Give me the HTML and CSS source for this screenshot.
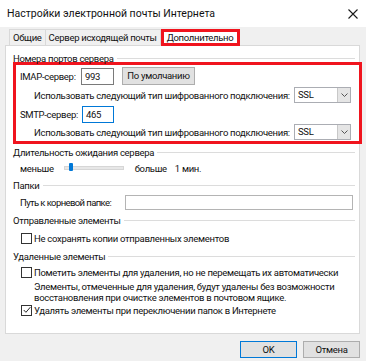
FILE: index.html
```html
<!DOCTYPE html>
<html lang="ru">
<head>
    <meta charset="UTF-8">
    <title>Настройки электронной почты Интернета</title>
    <link rel="stylesheet" href="styles.css">
</head>
<body>

    <div class="titlebar">
        <span class="title">Настройки электронной почты Интернета</span>
        <svg class="close" width="10" height="10" viewBox="0 0 10 10">
            <path d="M0.5 0.5 L9.5 9.5 M9.5 0.5 L0.5 9.5" stroke="#1a1a1a" stroke-width="1.1" fill="none"/>
        </svg>
    </div>

    <div class="tabs">
        <div class="tab">Общие</div>
        <div class="tab">Сервер исходящей почты</div>
        <div class="tab active">Дополнительно</div>
    </div>

    <div class="panel">
        <div class="group-head first"><span>Номера портов сервера</span></div>
        <div class="marked">
            <div class="row port-row">
                <span class="port-label">IMAP-сервер:</span>
                <div class="field port">993</div>
                <div class="btn">По умолчанию</div>
            </div>
            <div class="row enc-row tall">
                <span>Использовать следующий тип шифрованного подключения:</span>
                <div class="select"><span class="value">SSL</span><span class="drop"><svg width="7" height="4" viewBox="0 0 7 4"><path d="M0.5 0.5 L3.5 3.5 L6.5 0.5" stroke="#555" fill="none"/></svg></span></div>
            </div>
            <div class="row port-row">
                <span class="port-label">SMTP-сервер:</span>
                <div class="field port focus">465</div>
            </div>
            <div class="row enc-row">
                <span>Использовать следующий тип шифрованного подключения:</span>
                <div class="select"><span class="value">SSL</span><span class="drop"><svg width="7" height="4" viewBox="0 0 7 4"><path d="M0.5 0.5 L3.5 3.5 L6.5 0.5" stroke="#555" fill="none"/></svg></span></div>
            </div>
        </div>

        <div class="group-head h16"><span>Длительность ожидания сервера</span></div>
        <div class="row slider-row">
            <span>меньше</span>
            <div class="track"><div class="thumb"></div></div>
            <span class="more">больше</span>
            <span>1 мин.</span>
        </div>

        <div class="group-head h18"><span>Папки</span></div>
        <div class="row path-row">
            <span class="path-label">Путь к корневой папке:</span>
            <div class="field path"></div>
        </div>

        <div class="group-head h19"><span>Отправленные элементы</span></div>
        <div class="row check-row h17">
            <span class="checkbox"></span>
            <span>Не сохранять копии отправленных элементов</span>
        </div>

        <div class="group-head h18"><span>Удаленные элементы</span></div>
        <div class="row check-row h15">
            <span class="checkbox"></span>
            <span>Пометить элементы для удаления, но не перемещать их автоматически</span>
        </div>
        <p class="note">Элементы, отмеченные для удаления, будут удалены без возможности<br>восстановления при очистке элементов в почтовом ящике.</p>
        <div class="row check-row h14">
            <span class="checkbox checked"><svg width="9" height="8" viewBox="0 0 9 8"><path d="M0.8 4 L3.3 6.6 L8.3 0.8" stroke="#222" stroke-width="1.1" fill="none"/></svg></span>
            <span>Удалять элементы при переключении папок в Интернете</span>
        </div>
    </div>

    <div class="footer">
        <div class="btn dialog default">OK</div>
        <div class="btn dialog">Отмена</div>
    </div>

</body>
</html>
```

FILE: styles.css
```css
body {
    font-family: Roboto, "Noto Sans", sans-serif;
    font-size: 9.5px;
    letter-spacing: -0.3px;
    color: #111;
    background: #f0f0f0;
    margin: 0;
    padding: 0;
    width: 366px;
    height: 361px;
    overflow: hidden;
    white-space: nowrap;
}
.titlebar {
    height: 27px;
    background: #fff;
    display: flex;
    align-items: center;
    justify-content: space-between;
    padding: 0 8px 0 7px;
    font-size: 10.5px;
    letter-spacing: 0;
}
.close {
    display: block;
}

.tabs {
    display: flex;
    height: 16px;
    margin-top: 2px;
    padding-left: 9px;
    position: relative;
    z-index: 1;
}
.tab {
    padding: 0 3px;
    line-height: 15px;
    border: 1px solid #d9d9d9;
    border-bottom: none;
    margin-right: -1px;
}
.tab.active {
    background: #fff;
    border: 3px solid #f0141e;
    line-height: 11px;
    height: 17px;
    box-sizing: border-box;
    margin-left: 1px;
    padding: 0 4px 0 3px;
}

.panel {
    background: #fff;
    border: 1px solid #d9d9d9;
    margin: 0 6px 0 5px;
    height: 289px;
    box-sizing: border-box;
    padding: 6px 4px 0 7px;
}
.group-head {
    display: flex;
    align-items: center;
    height: 12px;
}
.group-head::after {
    content: "";
    flex: 1;
    border-top: 1px solid #dcdcdc;
    margin-left: 3px;
}
.h16 { height: 16px; }
.h18 { height: 18px; }
.h19 { height: 19px; }
.h17 { height: 17px; }
.h15 { height: 15px; }
.h14 { height: 14px; }

.marked {
    border: 3px solid #f0141e;
    margin: -2px -7px 0 0;
    padding: 2px 0 0 4px;
}
.row {
    display: flex;
    align-items: center;
}
.row > span {
    flex-shrink: 0;
}
.port-row {
    height: 18px;
}
.port-label {
    width: 61px;
}
.field {
    border: 1px solid #7a7a7a;
    background: #fff;
    box-sizing: border-box;
}
.port {
    width: 33px;
    height: 17px;
    line-height: 15px;
    padding-left: 3px;
}
.port.focus {
    border-color: #0078d7;
    margin-left: 1px;
    width: 32px;
}
.btn {
    background: #e1e1e1;
    border: 1px solid #adadad;
    box-sizing: border-box;
    text-align: center;
}
.port-row .btn {
    margin-left: 8px;
    width: 73px;
    height: 18px;
    line-height: 16px;
}

.enc-row {
    height: 18px;
    padding-left: 14px;
    padding-right: 8px;
}
.enc-row.tall {
    height: 20px;
}
.select {
    margin-left: auto;
    width: 57px;
    height: 16px;
    border: 1px solid #abadb3;
    box-sizing: border-box;
    display: flex;
    background: #fff;
    flex-shrink: 0;
}
.select .value {
    flex: 1;
    line-height: 14px;
    padding-left: 3px;
}
.select .drop {
    width: 12px;
    background: #e5e5e5;
    border-left: 1px solid #c8c8c8;
    display: flex;
    align-items: center;
    justify-content: center;
}

.slider-row {
    height: 16px;
    padding-left: 7px;
}
.track {
    position: relative;
    width: 58px;
    height: 2px;
    background: #e7e7e7;
    border: 1px solid #d6d6d6;
    margin-left: 10px;
}
.thumb {
    position: absolute;
    left: 4px;
    top: -4px;
    width: 4px;
    height: 8px;
    background: #0078d7;
    border-radius: 1px;
}
.more {
    margin-left: 11px;
    margin-right: 8px;
}

.path-row {
    height: 17px;
    padding-left: 7px;
}
.path-label {
    letter-spacing: -0.6px;
}
.path {
    margin-left: auto;
    width: 228px;
    height: 15px;
    margin-right: 2px;
    border-color: #b4b4b4;
}

.check-row {
    padding-left: 8px;
}
.checkbox {
    width: 11px;
    height: 11px;
    border: 1px solid #333;
    box-sizing: border-box;
    background: #fff;
    margin-right: 2px;
    display: flex;
    align-items: center;
    justify-content: center;
}
.checkbox svg {
    display: block;
    margin-left: 1px;
}
.note {
    margin: 1px 0 0 21px;
    line-height: 11px;
}

.footer {
    display: flex;
    justify-content: flex-end;
    gap: 6px;
    margin-top: 7px;
    padding-right: 6px;
}
.btn.dialog {
    width: 57px;
    height: 17px;
    line-height: 15px;
}
.btn.default {
    border-color: #0078d7;
}
```
